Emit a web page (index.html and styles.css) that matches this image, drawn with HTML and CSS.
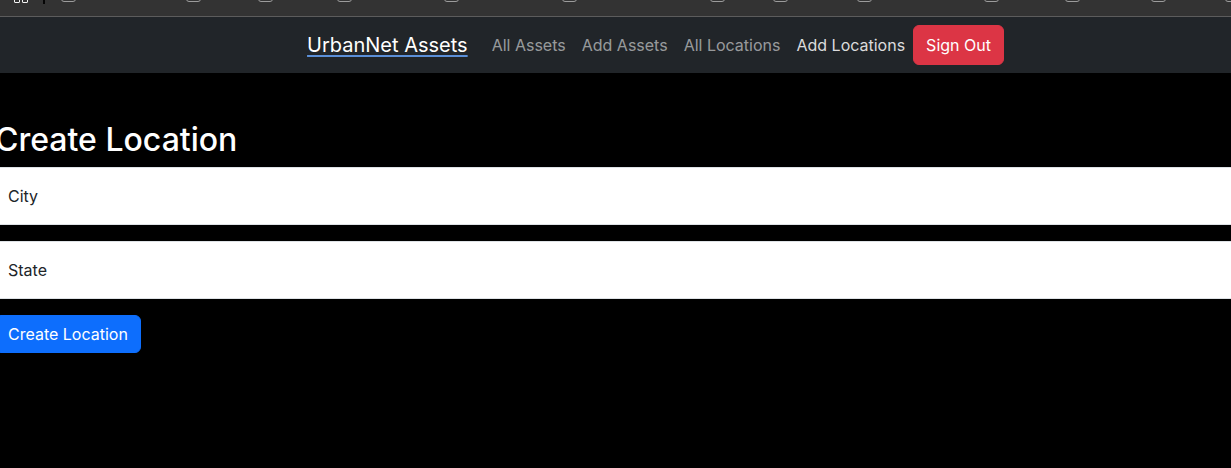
FILE: index.html
```html
<!DOCTYPE html>
<html lang="en">
<head>
<meta charset="utf-8">
<title>UrbanNet Assets</title>
<link rel="stylesheet" href="styles.css">
</head>
<body>
<div class="bookmarks">
  <div class="apps"><span class="sq"></span><span class="sq"></span></div>
  <div class="divider"></div>
  <div class="bm" style="width:125px"><span class="bm-icon"></span></div>
  <div class="bm" style="width:72px"><span class="bm-icon"></span></div>
  <div class="bm" style="width:79px"><span class="bm-icon"></span></div>
  <div class="bm" style="width:107px"><span class="bm-icon"></span></div>
  <div class="bm" style="width:118px"><span class="bm-icon"></span></div>
  <div class="bm" style="width:148px"><span class="bm-icon"></span></div>
  <div class="bm" style="width:63px"><span class="bm-icon"></span></div>
  <div class="bm" style="width:84px"><span class="bm-icon"></span></div>
  <div class="bm" style="width:127px"><span class="bm-icon"></span></div>
  <div class="bm" style="width:81px"><span class="bm-icon"></span></div>
  <div class="bm" style="width:86px"><span class="bm-icon"></span></div>
  <div class="bm" style="width:74px"><span class="bm-icon"></span></div>
  <div class="bm" style="width:40px"><span class="bm-icon"></span></div>
</div>
<nav class="navbar">
  <a class="brand" href="#">UrbanNet Assets</a>
  <a class="nav-link" href="#">All Assets</a>
  <a class="nav-link" href="#">Add Assets</a>
  <a class="nav-link" href="#">All Locations</a>
  <a class="nav-link active" href="#">Add Locations</a>
  <button class="btn btn-danger" type="button">Sign Out</button>
</nav>
<main class="page">
  <h2 class="title">Create Location</h2>
  <form class="form">
    <div class="field"><label class="field-label">City</label></div>
    <div class="field"><label class="field-label">State</label></div>
    <button class="btn btn-primary" type="button">Create Location</button>
  </form>
</main>
</body>
</html>
```
FILE: styles.css
```css
* { box-sizing: border-box; }
html, body { margin: 0; padding: 0; }
body {
  background: #000;
  font-family: Inter, "Noto Sans", sans-serif;
  font-size: 16px;
  line-height: 1.5;
  color: #fff;
  overflow: hidden;
}

.bookmarks {
  height: 17px;
  background: #333333;
  border-bottom: 1px solid #5c5c5c;
  display: flex;
  align-items: flex-start;
  padding-left: 14px;
  overflow: hidden;
}
.apps { flex: none; display: flex; gap: 2px; width: 29px; }
.sq {
  flex: none;
  width: 6px; height: 9px; margin-top: -6px;
  border: 1.5px solid #f2f2f2; border-radius: 1px;
}
.divider { flex: none; width: 2px; height: 4px; background: #050505; margin-right: 16px; }
.bm { flex: none; display: flex; }
.bm-icon {
  flex: none;
  width: 15px; height: 15px; margin-top: -13px;
  border: 1.5px solid #9c9c9c; border-radius: 3px;
}

.navbar {
  height: 56px;
  background: #212529;
  display: flex;
  align-items: center;
  justify-content: center;
  padding-left: 80px;
}
.brand {
  font-size: 20px;
  color: #fff;
  text-decoration: underline;
  text-decoration-color: #5b8fd8;
  text-underline-offset: 3px;
  margin-right: 16px;
  line-height: 30px;
}
.nav-link {
  color: rgba(255, 255, 255, 0.55);
  text-decoration: none;
  padding: 8px;
}
.nav-link.active { color: rgba(255, 255, 255, 0.85); }

.btn {
  font-family: inherit;
  font-size: 16px;
  line-height: 24px;
  color: #fff;
  border: 1px solid transparent;
  border-radius: 6px;
  padding: 7px 12px;
  cursor: pointer;
}
.btn-danger { background: #dc3545; border-color: #dc3545; }
.btn-primary { background: #0d6efd; border-color: #0d6efd; padding: 6px 12px; }

.page { margin-left: -5px; padding-top: 48px; }
.title {
  font-size: 32px;
  font-weight: 500;
  line-height: 1.2;
  margin: 0 0 8px;
}
.form { display: flex; flex-direction: column; align-items: flex-start; }
.field {
  width: calc(100% + 100px);
  height: 58px;
  background: #fff;
  border: 1px solid #dee2e6;
  margin-bottom: 16px;
  display: flex;
  align-items: center;
  padding: 0 12px;
}
.field-label { color: #212529; font-size: 16px; }
```
